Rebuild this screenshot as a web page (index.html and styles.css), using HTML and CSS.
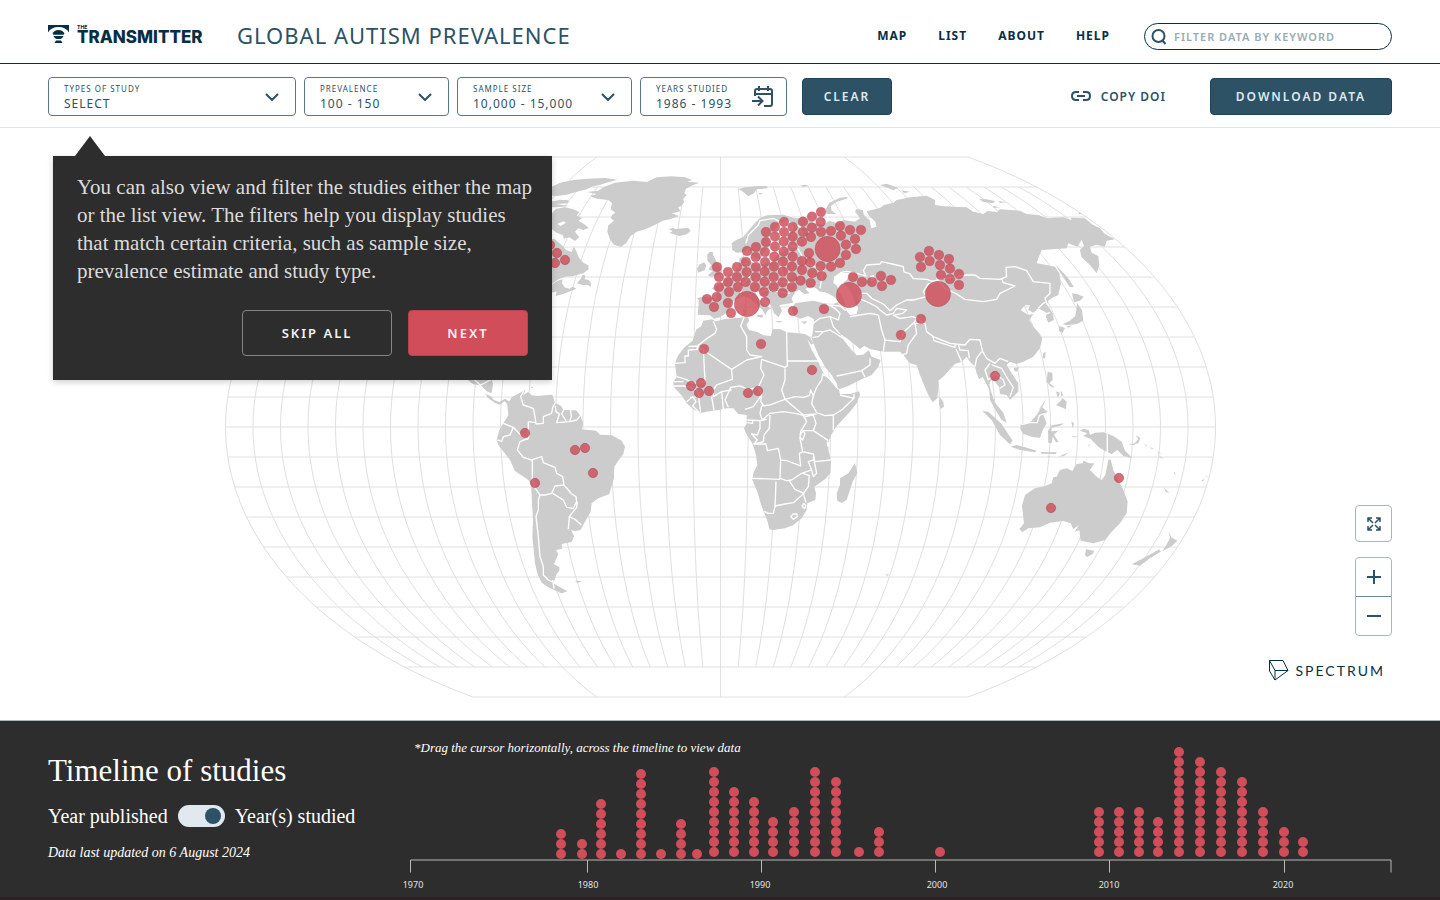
FILE: index.html
```html
<!DOCTYPE html>
<html lang="en">
<head>
<meta charset="utf-8">
<meta name="viewport" content="width=device-width, initial-scale=1">
<title>Global Autism Prevalence</title>
<link rel="stylesheet" href="styles.css">
</head>
<body>
<header class="header">
  <a class="brand" href="#" aria-label="The Transmitter">
    <svg class="brand-icon" viewBox="0 0 21 18" aria-hidden="true"><path d="M0 0H21V7.500Q18 2 10.500 2Q3 2 0 7.500Z"/><path d="M4.500 8.800Q6 5 10.500 5Q15 5 16.500 8.800L15.500 9.800H5.500Z"/><path d="M5.500 11H15.500Q14 14 12.500 14H8.500Q7 14 5.500 11Z"/><path d="M8 15.500H13L14.500 18H6.500Z"/></svg>
    <span class="brand-words"><span class="brand-the">THE</span><span class="brand-name">TRANSMITTER</span></span>
  </a>
  <h1 class="title">GLOBAL AUTISM PREVALENCE</h1>
  <nav class="nav">
    <a href="#">MAP</a><a href="#">LIST</a><a href="#">ABOUT</a><a href="#">HELP</a>
  </nav>
  <label class="search">
    <svg viewBox="0 0 16 16" aria-hidden="true"><circle cx="7.500" cy="7" r="6"/><path d="M11 11L14.500 15"/></svg>
    <input type="search" placeholder="FILTER DATA BY KEYWORD" aria-label="Filter data by keyword">
  </label>
</header>

<section class="toolbar" aria-label="Filters">
  <div class="field field-types">
    <label for="types">TYPES OF STUDY</label>
    <select id="types"><option>SELECT</option></select>
    <svg class="chevron" viewBox="0 0 14 8" aria-hidden="true"><path d="M1 1L7 7L13 1"/></svg>
  </div>
  <div class="field field-prevalence">
    <label for="prevalence">PREVALENCE</label>
    <select id="prevalence"><option>100 - 150</option></select>
    <svg class="chevron" viewBox="0 0 14 8" aria-hidden="true"><path d="M1 1L7 7L13 1"/></svg>
  </div>
  <div class="field field-sample">
    <label for="sample">SAMPLE SIZE</label>
    <select id="sample"><option>10,000 - 15,000</option></select>
    <svg class="chevron" viewBox="0 0 14 8" aria-hidden="true"><path d="M1 1L7 7L13 1"/></svg>
  </div>
  <div class="field field-years">
    <label for="years">YEARS STUDIED</label>
    <input id="years" type="text" value="1986 - 1993">
    <svg class="calendar" viewBox="0 0 22 22" aria-hidden="true"><path d="M3 10V5Q3 3 5 3H18Q20 3 20 5V18Q20 20 18 20H12M3 8H20M7 0V5M16 0V5M0 15H10M6 10.500L10.500 15L6 19.500"/></svg>
  </div>
  <button class="btn btn-clear" type="button">CLEAR</button>
  <a class="copy" href="#"><svg viewBox="0 0 20 10" aria-hidden="true"><path d="M8 1H5Q1 1 1 5Q1 9 5 9H8M12 1H15Q19 1 19 5Q19 9 15 9H12M6 5H14"/></svg>COPY DOI</a>
  <button class="btn btn-download" type="button">DOWNLOAD DATA</button>
</section>

<main class="stage">
  <svg class="map" viewBox="0 128 1440 592" role="img" aria-label="World map of autism prevalence studies">
    <g id="graticule" class="graticule"></g>

    <g class="land" transform="translate(440 150) scale(.3333)">
      <path d="M300 120L336 110L360 98L400 90L440 86L495 84L532 89L505 97L480 104L455 110L440 118L405 127L380 134L350 138L300 136Z"/>
      <path d="M300 150L340 154L360 149L386 151L384 160L350 162L388 168L350 172L300 172Z"/>
      <path d="M300 190L336 190L348 176L375 172L400 178L418 186L410 196L426 205L415 212L432 222L447 234L430 240L415 235L405 245L418 262L405 273L388 262L372 266L368 255L350 248L336 238L300 230ZM352 222L362 228L378 218L370 214Z" fill-rule="evenodd"/>
      <path d="M300 262L345 268L365 285L378 300L395 306L402 290L410 305L416 322L430 338L445 346L446 358L430 370L400 378L375 380L352 390L336 402L300 410Z"/>
      <path d="M300 405L336 404L352 392L368 388L366 400L374 412L388 416L398 410L410 416L390 424L370 432L347 438L350 424L330 430Z"/>
      <path d="M411 400L422 386L428 374L436 376L434 388L446 390L453 398L452 410L442 404L430 406Z"/>
      <path d="M440 126L475 122L490 112L525 98L580 92L620 96L650 82L695 79L735 82L757 90L742 95L778 98L758 106L738 116L732 130L740 135L728 148L733 156L724 168L714 172L722 184L696 190L716 198L690 208L668 212L650 222L620 236L590 245L572 258L558 280L543 291L522 284L510 268L502 245L505 226L522 212L512 205L516 196L526 188L512 178L516 160L505 150L470 146L450 138L470 132Z"/>
      <path d="M686 237L700 234L708 238L728 235L745 234L752 242L740 253L718 258L700 252L688 249L698 244Z"/>
      <path d="M802 314L808 306L818 305L820 316L828 332L838 345L848 362L838 374L812 380L803 376L818 364L806 358L814 346L802 332Z"/>
      <path d="M771 356L778 344L792 337L799 346L794 361L774 368Z"/>
    </g>

    <g class="land" transform="translate(680 150) scale(.3333)">
      <path d="M155 280L165 272L190 260L205 242L222 222L240 204L262 196L310 194L345 205L375 205L400 218L430 224L448 212L470 220L490 210L525 215L540 205L525 185L530 177L548 180L552 195L570 212L573 235L590 230L586 215L568 198L560 184L575 180L600 174L612 165L640 158L650 150L690 142L740 137L765 150L765 165L785 168L820 170L860 172L880 185L910 192L922 183L952 186L960 178L1020 182L1040 192L1075 195L1100 205L1150 202L1175 211L1172 203L1215 205L1235 222L1260 235L1275 252L1305 268L1280 272L1275 290L1250 284L1230 290L1235 308L1255 318L1258 345L1250 370L1230 345L1205 322L1200 300L1212 288L1205 270L1192 290L1165 280L1160 295L1130 297L1085 300L1075 325L1070 340L1100 345L1125 350L1138 370L1143 400L1135 435L1115 445L1105 452L1102 465L1118 490L1122 510L1105 518L1098 500L1100 488L1075 475L1060 488L1045 480L1050 466L1035 466L1022 480L1035 488L1045 495L1060 492L1048 510L1060 530L1078 550L1087 565L1080 595L1060 620L1030 635L1010 642L990 635L980 645L995 670L1015 700L1015 725L990 750L980 735L960 732L958 712L945 695L933 690L928 705L935 730L944 756L970 788L980 818L965 810L948 782L930 750L928 720L916 695L908 680L898 688L890 670L885 650L870 635L860 620L845 635L825 642L810 658L795 675L775 692L775 720L772 745L758 757L745 735L732 705L720 675L710 645L690 640L670 615L660 605L610 605L570 597L553 588L540 597L522 582L495 560L480 552L495 575L515 600L530 616L550 614L566 600L575 620L602 630L595 650L575 675L540 690L500 710L475 718L470 700L455 675L435 650L415 615L400 580L395 565L400 535L402 508L385 498L360 506L343 498L335 478L345 460L375 455L400 452L430 460L460 462L476 456L462 440L440 428L418 424L408 415L396 410L376 416L388 430L373 432L358 420L346 425L335 445L340 458L318 462L298 465L306 482L296 502L282 490L275 470L262 450L240 430L225 425L235 445L255 465L275 476L264 480L256 495L246 478L215 450L195 438L170 448L150 460L155 472L138 490L120 502L102 506L90 496L53 494L57 450L50 445L70 440L110 445L108 425L95 415L125 400L150 375L165 362L178 348L178 326L190 318L202 332L240 345L275 335L300 310L322 295L365 290L330 283L318 265L345 232L325 215L300 215L285 240L265 265L272 285L250 310L240 330L215 318L205 290L190 306L170 308L157 300Z"/>
      <path d="M440 192L437 178L448 158L480 143L503 141L500 146L470 155L452 168L455 182L470 192Z"/>
      <path d="M175 117L195 112L225 109L262 108L262 115L230 118L222 130L205 139L190 126Z"/>
      <path d="M236 129L250 130L240 134ZM360 107L375 104L388 108L370 111ZM600 105L620 101L655 114L640 120L618 112ZM664 121L690 125L672 130Z"/>
      <path d="M898 148L915 147L945 153L940 160L910 156ZM955 153L980 157L960 159ZM938 168L960 172L942 174ZM1195 188L1206 190L1198 193Z"/>
      <path d="M1125 343L1142 360L1165 385L1182 412L1168 410L1152 385Z"/>
      <path d="M1176 430L1190 432L1211 440L1200 452L1182 457Z"/>
      <path d="M1192 460L1206 480L1210 512L1190 522L1160 526L1148 522L1170 512L1186 498ZM1138 528L1155 534L1148 549L1136 542ZM1158 530L1174 526L1168 533Z"/>
      <path d="M1090 610L1097 605L1095 628L1088 622ZM1002 654L1017 651L1012 665L1003 663ZM778 740L790 755L792 770L782 777L777 760Z"/>
      <path d="M1103 665L1117 668L1118 690L1108 700L1125 712L1114 712L1100 695ZM1128 765L1140 755L1148 744L1160 755L1158 778L1144 772ZM1128 724L1140 728L1134 745ZM1142 720L1150 735L1144 740ZM1076 780L1100 744L1088 770Z"/>
      <path d="M190 478L197 478L197 496L189 494ZM192 462L198 462L196 474ZM230 495L250 494L247 503L232 500ZM285 513L310 514L298 518ZM363 515L382 513L374 522Z"/>
    </g>
    <g class="sea" transform="translate(680 150) scale(.3333)">
      <path d="M462 380L480 368L512 370L500 390L490 398L505 415L520 440L525 465L535 472L530 492L510 495L498 480L492 450L478 425L470 405L460 400Z"/>
      <path d="M345 428L360 422L373 434L388 432L398 415L408 424L440 430L462 442L470 455L440 458L400 450L372 452L345 458Z"/>
      <path d="M570 378L582 374L584 388L574 394Z"/>
    </g>
    <g class="borders" transform="translate(680 150) scale(.3333)">
      <path d="M480 368L500 364L530 370L558 378L550 362L560 345L600 342L605 335L650 345L670 350L672 366L690 372L700 386L740 388L770 398L745 402L730 425L740 440L700 450L680 450L650 465L630 482L610 462L575 445L560 430L545 430L535 445"/>
      <path d="M535 445L560 455L590 470L600 480L620 495L640 490L650 475L680 480L668 490L640 496L660 505L700 500L735 520"/>
      <path d="M755 395L790 385L820 382L860 375L885 375L900 385L960 388L980 380L978 352L1005 350L1040 362L1060 395L1090 398L1110 400L1110 430L1095 445L1102 465"/>
      <path d="M770 385L795 415L830 432L855 448L910 455L950 448L960 430L1005 408L970 398L965 386M1075 475L1090 460L1100 455M1098 492L1110 488"/>
      <path d="M735 520L740 545L760 560L810 580L855 585L870 568L900 570L908 605L920 625L945 640L960 625L985 635M758 558L762 572L825 592L826 580M828 597L845 635M835 583L840 600L865 602L868 625M905 605L890 625L885 650M930 640L915 660L925 690M935 645L965 655L985 690L1000 712L990 740M925 690L945 670L970 690L975 705L960 715"/>
      <path d="M735 520L705 520L710 550L685 585L680 610L668 615M595 495L605 540L615 570L610 605M612 570L660 575L672 545L700 520L715 500"/>
      <path d="M475 458L490 470L510 475M400 520L420 505L450 500L475 510L480 490L465 475L440 462M430 545L450 540L495 568M450 500L460 530L480 552M405 545L430 545L415 560L398 562M470 678L500 672L545 662L570 645L570 625M545 662L555 682M510 500L540 495L570 490L595 495M440 464L480 468L498 482"/>
      <path d="M198 280L205 255L235 225L240 212L280 205M280 205L300 215M300 205L325 215L360 230L370 270M350 290L380 340L430 360L420 415M200 340L210 380L190 400L180 440M240 345L250 385L300 395L340 400M300 335L310 380M230 430L260 420L330 430"/>
    </g>

    <g class="land" transform="translate(670 300) scale(.3333)">
      <path d="M100 62L125 58L138 64L165 57L200 54L222 52L234 52L238 62L228 75L238 90L262 96L280 106L302 108L308 88L330 87L350 97L385 100L405 102L420 112L430 130L424 134L412 118L425 150L445 185L455 210L462 222L480 240L505 265L510 282L540 282L568 274L570 285L560 310L540 335L515 362L495 385L482 408L474 430L476 455L483 480L482 518L465 538L433 560L438 580L436 600L412 610L410 630L395 655L370 675L345 685L310 690L298 688L293 665L283 640L272 610L262 575L247 540L250 520L262 495L258 465L248 432L228 400L222 385L230 370L230 345L205 342L190 325L170 325L145 330L110 335L90 340L70 328L50 310L38 290L25 275L12 262L10 245L20 230L15 190L25 165L45 140L68 122L78 90L94 78Z"/>
      <path d="M555 489L562 518L548 545L530 600L515 609L502 602L500 580L510 555L510 535L535 520Z"/>
    </g>
    <g class="borders" transform="translate(670 300) scale(.3333)">
      <path d="M55 140L82 138L110 116L135 100L140 88L130 64M15 190L45 188L45 168L55 168L55 150L82 148L82 138L185 208L230 180L275 170L240 165L230 150L230 110L212 78L222 52"/>
      <path d="M100 147L105 245L70 250L48 238L20 230M275 178L345 202L352 198L350 97M352 183L455 183M185 208L187 238L140 255L128 272L130 290M275 178L272 205L282 225L265 262L235 268L210 258L182 262L175 278"/>
      <path d="M345 205L345 240L335 270L345 298L375 290L400 292L418 287L422 270L430 288L440 262L455 240L458 222L475 232L505 268"/>
      <path d="M430 288L425 310L440 338L465 347L490 345L515 330L552 295L552 282M552 295L510 285M490 345L490 390M345 298L365 315L400 345L440 342"/>
      <path d="M345 298L300 315L275 318L270 340L277 360L300 340L340 335L375 340L400 346L410 365L392 395L390 415L398 455L430 462L435 485L483 480M300 345L298 385L282 405L280 425L252 432L288 432L292 452L325 445L332 480L350 482L392 498L388 460L400 455"/>
      <path d="M405 350L430 345L438 370L430 392L398 392M430 392L475 422M332 480L330 535L350 542L365 540L395 520L425 510L415 485L430 480M247 535L330 538M318 545L315 620L310 640L295 640L283 634M315 618L345 612L370 608L402 580L375 568L358 543M398 520L418 527L415 560L400 580L408 608M430 470L440 520L430 530L425 510"/>
      <path d="M175 278L165 300L175 322M265 262L275 285L250 320L225 328M272 265L275 285L272 305L280 315M155 275L160 328M125 290L132 332M85 285L92 338M130 290L155 275L185 270M60 262L80 270L90 290L60 292M12 245L40 245M12 258L40 258L60 262M50 305L68 290L78 305L68 318L88 338"/>
      <path d="M232 360L270 362L270 385L262 405L245 402L262 420L252 432M232 368L248 370L248 360M270 362L290 358M362 650L370 642L380 642L382 650L370 658ZM396 618L402 610L408 618L403 626ZM390 405L400 392L405 400L398 420L390 412M472 425L474 440"/>
    </g>

    <g class="land" transform="translate(460 370) scale(.3333)">
      <path d="M20 28L95 28L99 42L95 70L80 64L62 46L40 43ZM76 72L92 78L102 90L118 96L135 86L150 96L144 106L134 94L120 104L106 100L84 84Z"/>
      <path d="M142 105L155 82L180 68L196 60L190 76L204 66L215 76L235 78L255 76L277 74L285 98L304 108L310 120L348 121L360 135L370 160L366 178L408 182L420 194L455 196L485 212L495 230L490 252L478 268L463 290L462 325L448 372L415 385L395 400L392 425L375 455L362 480L345 484L333 480L342 498L335 516L305 522L306 536L288 540L295 552L282 582L298 592L298 602L290 612L280 640L322 664L305 670L270 655L245 638L232 610L225 580L222 550L217 500L219 450L216 400L214 345L205 330L165 303L150 270L115 225L110 210L118 180L130 160L145 136Z"/>
      <path d="M345 636L352 632L366 634L356 638ZM210 52L220 50L218 54Z"/>
    </g>
    <g class="borders" transform="translate(460 370) scale(.3333)">
      <path d="M192 62L182 80L190 105L220 115L225 140L228 162L250 160L250 140L275 130L278 112L286 98M205 155L228 158M205 155L205 205L180 215L172 240L190 262L215 270L245 260L250 278L285 292L290 310L308 320L312 345L285 348L275 370L255 375L240 375L222 350L217 325L217 270"/>
      <path d="M130 160L160 172L182 195L205 208M160 172L150 195L130 200L125 214L112 210M278 370L310 390L320 412L340 415L350 395L348 380L335 372L312 345M352 395L350 412L328 440L345 448L364 465M328 440L325 478M240 375L235 390L235 420L228 440L235 500L240 560L250 590L250 615L265 630L290 642M278 630L282 656"/>
      <path d="M286 108L288 125L298 132L290 158L330 155L350 150L360 138M312 118L305 132L318 152M332 120L334 140L328 155M42 28L60 44M60 46L95 28"/>
    </g>

    <g class="land" transform="translate(960 380) scale(.3333)">
      <path d="M178 448L192 430L186 378L195 345L225 325L255 318L275 310L280 292L290 290L300 270L320 265L337 273L350 252L368 250L370 242L388 250L403 250L390 270L410 290L425 300L436 285L445 240L452 238L460 270L475 300L490 330L503 365L500 400L480 430L455 455L435 480L400 490L362 482L358 450L344 456L356 436L340 448L332 430L310 423L270 428L240 442L205 445L188 456Z"/>
      <path d="M378 508L403 512L398 522L380 532L375 524ZM626 452L634 472L652 482L636 498L607 514L622 490L630 474ZM598 508L602 515L570 535L540 557L515 553L550 535Z"/>
      <path d="M182 133L210 128L230 105L245 80L262 95L250 106L260 130L248 150L240 173L220 172L190 162L181 148ZM67 93L85 95L125 132L142 158L158 182L150 193L120 165L95 120ZM152 200L170 195L190 200L230 212L225 217L180 210ZM242 216L290 217L288 222L245 221ZM295 230L327 216L312 228ZM262 228L272 229L266 231Z"/>
      <path d="M264 152L275 136L312 130L300 138L275 143L274 154L294 152L282 164L296 186L288 187L278 170L275 190L265 188ZM360 152L370 146L386 150L390 165L405 158L430 157L460 168L485 185L495 212L518 235L490 228L472 210L455 222L435 213L415 200L400 185L392 176L370 168L382 160ZM334 124L342 130L338 146ZM322 170L330 172ZM335 168L358 170L340 172ZM386 192L390 195L386 200Z"/>
      <path d="M505 192L525 190L535 176L526 165L541 174L536 188L520 196ZM553 192L564 200L556 198ZM570 200L582 208L574 206ZM592 214L604 222L596 220ZM596 226L612 238L602 234ZM610 320L628 340L618 336ZM724 300L736 298L728 304ZM736 290L748 288L738 292ZM643 274L647 286L642 280ZM-222 582L-212 584L-220 588Z"/>
    </g>
    <g class="borders" transform="translate(960 380) scale(.3333)"><path d="M442 163V218M184 134L210 128L232 128L238 106L256 100"/></g>

    <g id="clusters" class="dots" transform="translate(680 150) scale(.3333)"></g>
    <g id="studies" class="dots"></g>
  </svg>

  <aside class="tip" aria-label="Guide">
    <p>You can also view and filter the studies either the map or the list view. The filters help you display studies that match certain criteria, such as sample size, prevalence estimate and study type.</p>
    <div class="tip-actions">
      <button class="tip-btn tip-skip" type="button">SKIP ALL</button>
      <button class="tip-btn tip-next" type="button">NEXT</button>
    </div>
  </aside>

  <div class="controls">
    <button class="control" type="button" aria-label="Full screen"><svg class="expand" viewBox="0 0 14 14" aria-hidden="true"><path d="M5 1H1V5M1 1L6 6M9 1H13V5M13 1L8 6M1 9V13H5M1 13L6 8M13 9V13H9M13 13L8 8"/></svg></button>
    <div class="zoom">
      <button type="button" aria-label="Zoom in"><svg viewBox="0 0 14 14" aria-hidden="true"><path d="M0 7H14M7 0V14"/></svg></button>
      <button type="button" aria-label="Zoom out"><svg viewBox="0 0 14 14" aria-hidden="true"><path d="M0 7H14"/></svg></button>
    </div>
  </div>
  <a class="spectrum" href="#"><svg viewBox="0 0 20 21" aria-hidden="true"><path d="M.5 .5H14L19 10.500L6 20L.5 11ZM.5 .5L6 10.500H19M6 10.500V20"/></svg>SPECTRUM</a>
</main>

<footer class="timeline">
  <div class="timeline-info">
    <h2>Timeline of studies</h2>
    <label class="switch"><span>Year published</span><input type="checkbox" role="switch" checked><span>Year(s) studied</span></label>
    <p class="updated">Data last updated on 6 August 2024</p>
  </div>
  <div class="timeline-chart">
    <p class="hint">*Drag the cursor horizontally, across the timeline to view data</p>
    <svg viewBox="396 740 1000 156" role="img" aria-label="Studies per year">
      <g id="years-dots" class="year-dots"></g>
      <path class="axis" d="M410.500 872.500V860H1391V872.500M587.500 860V872.500M761.500 860V872.500M935.500 860V872.500M1109.500 860V872.500M1284.500 860V872.500"/>
      <g class="ticks"><text x="413" y="888">1970</text><text x="588" y="888">1980</text><text x="760" y="888">1990</text><text x="937" y="888">2000</text><text x="1109" y="888">2010</text><text x="1283" y="888">2020</text></g>
    </svg>
  </div>
</footer>
<script src="script.js"></script>
</body>
</html>
```

FILE: styles.css
```css
* { box-sizing: border-box; }
:root {
  --navy: #062f45;
  --blue: #2d5266;
  --dark: #2d2d2d;
  --red: #d04d59;
}
body {
  margin: 0;
  min-height: 100vh;
  display: flex;
  flex-direction: column;
  background: #fff;
  color: var(--blue);
  font-family: "Noto Sans", "Open Sans", sans-serif;
}
a { color: inherit; text-decoration: none; }
button, input, select { font: inherit; color: inherit; }
button { cursor: pointer; padding: 0; }
svg { display: block; }

.header {
  height: 64px;
  padding: 8px 48px 0;
  display: flex;
  align-items: center;
  border-bottom: 1px solid var(--navy);
}
.brand { display: flex; width: 189px; margin-bottom: 2px; color: var(--navy); gap: 8px; }
.brand-icon { width: 21px; height: 18px; fill: currentColor; }
.brand-words { display: flex; flex-direction: column; gap: 2px; font-family: Inter, sans-serif; font-weight: 800; }
.brand-the { font-size: 5px; line-height: 4px; }
.brand-name { font-size: 17px; line-height: 13px; }
.title { margin: 0; padding-bottom: 2px; font-size: 22px; line-height: 30px; font-weight: 400; letter-spacing: 1px; white-space: nowrap; }
.nav {
  margin-left: auto;
  display: flex;
  gap: 31px;
  color: var(--navy);
  font-size: 12px;
  font-weight: 700;
  letter-spacing: 1px;
}
.search {
  width: 248px;
  height: 27px;
  margin: 2px 0 0 34px;
  padding: 0 6px;
  display: flex;
  align-items: center;
  gap: 7px;
  border: 1px solid var(--navy);
  border-radius: 14px;
}
.search svg { width: 16px; height: 16px; flex: none; fill: none; stroke: var(--blue); stroke-width: 2; }
.search input { flex: 1; min-width: 0; padding: 0; border: 0; outline: 0; background: none; font-size: 11px; font-weight: 600; letter-spacing: 1px; }
.search input::placeholder { color: #9aabb5; opacity: 1; }

.toolbar {
  height: 64px;
  padding: 1px 48px 0;
  display: flex;
  align-items: center;
  gap: 8px;
  border-bottom: 1px solid #dfe3e5;
}
.field {
  position: relative;
  height: 39px;
  padding: 5px 15px 0;
  border: 1px solid #56768a;
  border-radius: 4px;
}
.field label { display: block; font-size: 8px; line-height: 12px; letter-spacing: 1px; white-space: nowrap; }
.field select, .field input {
  display: block;
  width: 100%;
  height: 17px;
  padding: 0;
  border: 0;
  outline: 0;
  appearance: none;
  background: none;
  font-size: 12px;
  line-height: 17px;
  letter-spacing: 1px;
}
.field-types { width: 248px; }
.field-prevalence { width: 145px; }
.field-sample { width: 175px; }
.field-years { width: 147px; }
.chevron, .calendar { position: absolute; pointer-events: none; fill: none; stroke: var(--blue); stroke-width: 2; }
.chevron { right: 16px; top: 15px; width: 14px; height: 8px; }
.calendar { right: 12px; top: 8px; width: 22px; height: 22px; }
.btn {
  height: 37px;
  border: 1px solid #1e4358;
  border-radius: 4px;
  background: var(--blue);
  color: #dfe9ef;
  font-size: 12px;
  font-weight: 600;
  letter-spacing: 2px;
}
.btn-clear { width: 90px; margin-left: 7px; }
.btn-download { width: 182px; margin-left: 36px; }
.copy { margin-left: auto; display: flex; align-items: center; gap: 10px; font-size: 12px; font-weight: 600; letter-spacing: 1px; }
.copy svg { width: 20px; height: 10px; fill: none; stroke: currentColor; stroke-width: 2; }

.stage { position: relative; flex: 1; }
.map { width: 100%; height: auto; }
.graticule { fill: none; stroke: #e0e0e0; stroke-width: 1; }
.land { fill: #ccc; }
.sea { fill: #fff; }
.borders { fill: none; stroke: #fff; stroke-width: 4; stroke-linejoin: round; }
.dots { fill: var(--red); fill-opacity: .82; stroke: #8d3945; stroke-opacity: .4; }
#clusters { stroke-width: 2; }
#studies { stroke-width: 1; }

.tip {
  position: absolute;
  left: 53px;
  top: 28px;
  width: 499px;
  padding: 17px 16px 24px 24px;
  background: var(--dark);
  color: #dcdcdc;
  box-shadow: 0 2px 6px rgba(0, 0, 0, .2);
}
.tip::before {
  content: "";
  position: absolute;
  left: 22px;
  top: -20px;
  border: solid transparent;
  border-width: 0 15px 20px;
  border-bottom-color: var(--dark);
}
.tip p { margin: 0; font-family: "Liberation Serif", serif; font-size: 21px; line-height: 28px; }
.tip-actions { display: flex; justify-content: flex-end; gap: 16px; margin-top: 25px; padding-right: 8px; }
.tip-btn { height: 46px; border-radius: 4px; font-size: 13px; font-weight: 600; letter-spacing: 2px; color: #f3f3f3; }
.tip-skip { width: 150px; background: none; border: 1px solid #848484; }
.tip-next { width: 120px; background: var(--red); border: 1px solid #b84450; }

.controls { position: absolute; right: 48px; top: 377px; display: grid; gap: 15px; }
.control, .zoom { width: 37px; border: 1px solid #a9b6be; border-radius: 4px; background: #fff; overflow: hidden; }
.control { height: 37px; }
.zoom button { display: grid; place-items: center; width: 100%; height: 38px; border: 0; background: none; }
.zoom button + button { border-top: 1px solid #6f8a99; height: 39px; }
.control { display: grid; place-items: center; }
.controls svg { width: 14px; height: 14px; fill: none; stroke: var(--blue); stroke-width: 2; }
.controls .expand { stroke-width: 1.5; }
.spectrum {
  position: absolute;
  right: 55px;
  bottom: 39px;
  display: flex;
  align-items: center;
  gap: 7px;
  color: var(--navy);
  font-family: Lato, sans-serif;
  font-size: 14px;
  letter-spacing: 2px;
}
.spectrum svg { width: 20px; height: 21px; fill: none; stroke: currentColor; stroke-width: 1; }

.timeline {
  min-height: 180px;
  padding: 0 44px 0 48px;
  display: flex;
  background: var(--dark);
  border-top: 1px solid #a9b6be;
  border-bottom: 3px solid #2b2024;
  color: #fff;
  font-family: "Liberation Serif", serif;
}
.timeline-info { width: 348px; padding-top: 31px; }
.timeline h2 { margin: 0; font-size: 31px; line-height: 38px; font-weight: 400; }
.switch { display: flex; align-items: center; gap: 10px; margin-top: 13px; font-size: 20px; line-height: 26px; white-space: nowrap; }
.switch input {
  appearance: none;
  width: 47px;
  height: 22px;
  margin: 0;
  padding: 3px 4px;
  display: flex;
  justify-content: flex-end;
  border-radius: 11px;
  background: #dfe9ef;
}
.switch input::before { content: ""; width: 16px; height: 16px; border-radius: 50%; background: var(--blue); }
.switch input:not(:checked) { justify-content: flex-start; }
.updated, .hint { margin: 0; line-height: 18px; font-style: italic; }
.updated { margin-top: 15px; font-size: 14px; }
.timeline-chart { position: relative; flex: 1; padding-top: 19px; }
.timeline-chart svg { width: 100%; height: auto; }
.hint { position: absolute; left: 18px; top: 18px; font-size: 13px; }
.year-dots { fill: var(--red); }
.axis { fill: none; stroke: #b9b9b9; stroke-width: 1; }
.ticks { fill: #e4e4e4; font-family: "Noto Sans", sans-serif; font-size: 9px; text-anchor: middle; }
```

FILE: script.js
```js
const NS = "http://www.w3.org/2000/svg";

function add(parent, name, attrs) {
  const node = document.createElementNS(NS, name);
  for (const key in attrs) node.setAttribute(key, attrs[key]);
  parent.appendChild(node);
}

// Kavrayskiy VII: evenly spaced parallels, elliptical meridians.
function project(lon, lat) {
  const x = 720.5 + 495 * (lon / 180) * Math.sqrt(1 - 3 * (lat / 180) ** 2);
  return [x.toFixed(1), (427 - 3 * lat).toFixed(1)];
}

const graticule = document.getElementById("graticule");
for (let lon = -180; lon <= 180; lon += 10) {
  const limit = lon % 90 === 0 ? 90 : 80;
  const points = [];
  for (let lat = -limit; lat <= limit; lat += 2) points.push(project(lon, lat).join(" "));
  add(graticule, "path", { d: "M" + points.join("L") });
}
for (let lat = -90; lat <= 90; lat += 10) {
  add(graticule, "path", { d: "M" + project(-180, lat).join(" ") + "L" + project(180, lat).join(" ") });
}

const clusters = [
  [423,186],[396,200],[312,216],[369,215],[422,216],[285,231],[338,231],[480,228],[258,246],[312,246],
  [396,233],[369,246],[423,246],[453,243],[510,240],[543,240],[285,260],[338,260],[366,275],[393,261],
  [483,257],[525,267],[258,276],[285,290],[311,275],[498,284],[528,297],[228,291],[201,303],[255,306],
  [283,320],[311,305],[338,290],[387,309],[498,315],[480,339],[198,336],[227,321],[255,336],[282,350],
  [309,335],[338,320],[366,333],[391,337],[422,348],[453,350],[171,351],[228,351],[144,366],[171,381],
  [200,366],[111,351],[117,381],[144,396],[117,411],[147,426],[174,411],[197,396],[227,381],[254,365],
  [281,381],[309,365],[336,350],[366,360],[397,369],[425,378],[392,399],[362,392],[336,381],
  [254,395],[225,411],[252,426],[281,411],[308,397],[336,411],[308,429],[255,456],[81,447],
  [110,441],[102,471],[144,459],[153,489],[339,483],[432,477],[519,381],[546,396],[576,396],[603,378],
  [633,390],[606,408],[720,321],[747,303],[723,351],[749,333],[777,315],[780,345],[807,327],[810,356],
  [783,375],[810,387],[837,372],[837,405],[723,507],[663,555],[72,597],[243,582]
];
const largeClusters = [[443,297],[201,462],[507,435],[774,432]];
const clusterLayer = document.getElementById("clusters");
clusters.forEach(([cx, cy]) => add(clusterLayer, "circle", { cx, cy, r: 14.5 }));
largeClusters.forEach(([cx, cy]) => add(clusterLayer, "circle", { cx, cy, r: 38 }));

const studies = [
  [691,386],[701,383],[699,393],[709,391],[748,393],[758,391],[812,370],[995,376],[525,433],[575,450],
  [585,448],[593,473],[535,483],[1119,478],[1051,508],[550,245],[557,253],[555,263],[565,260]
];
const studyLayer = document.getElementById("studies");
studies.forEach(([cx, cy]) => add(studyLayer, "circle", { cx, cy, r: 4.7 }));

// [x position, number of studies, y of the lowest dot]
const years = [
  [561,3,854],[582,2,854],[601,6,854],[621,1,854],[641,9,854],[661,1,854],[681,4,854],[697,1,854],
  [714,9,852],[734,7,852],[754,6,852],[773,4,852],[794,5,852],[815,9,852],[836,8,852],[859,1,852],
  [879,3,852],[940,1,852],[1099,5,852],[1119,5,852],[1139,5,852],[1158,4,852],[1179,11,852],
  [1200,10,852],[1221,9,852],[1242,8,852],[1263,5,852],[1284,3,852],[1303,2,852]
];
const yearLayer = document.getElementById("years-dots");
years.forEach(([cx, count, base]) => {
  for (let i = 0; i < count; i++) add(yearLayer, "circle", { cx, cy: base - i * 10, r: 5 });
});
```
